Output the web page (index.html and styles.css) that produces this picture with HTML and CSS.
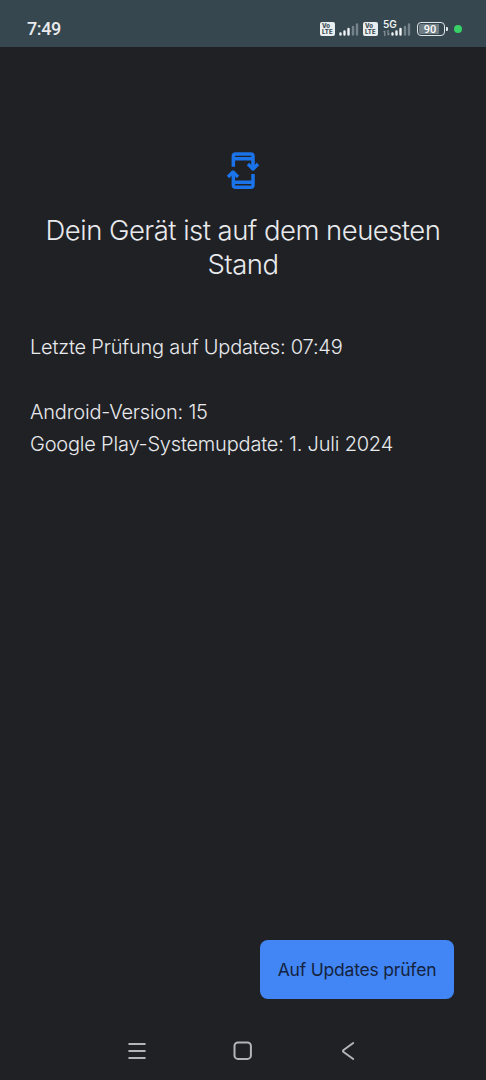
FILE: index.html
```html
<!DOCTYPE html>
<html lang="de">
<head>
  <meta charset="UTF-8" />
  <meta name="viewport" content="width=device-width, initial-scale=1.0"/>
  <title>Systemupdate</title>
  <link rel="stylesheet" href="styles.css">
</head>
<body>
  <div class="screen">
    <header class="status-bar">
      <span class="clock">7:49</span>
      <div class="status-icons">
        <span class="volte"><span>Vo</span><span>LTE</span></span>
        <svg class="signal" width="20" height="13" viewBox="0 0 20 13">
          <path class="bar-on" d="M1.5 10.5v1M5.5 8.5v3M9.5 6v5.5" />
          <path class="bar-off" d="M14 4v7.5M18 1.5v10" />
        </svg>
        <span class="volte"><span>Vo</span><span>LTE</span></span>
        <div class="mobile-data">
          <span class="network">5G</span>
          <svg class="data-arrows" width="7" height="6" viewBox="0 0 7 6">
            <path d="M1.8 6V1M.3 2.3L1.8.8M5 0v5M6.6 3.7L5 5.2" />
          </svg>
          <svg class="signal" width="20" height="13" viewBox="0 0 20 13">
            <path class="bar-on" d="M1.5 10.5v1M5.5 8.5v3M9.5 6v5.5" />
            <path class="bar-off" d="M14 4v7.5M18 1.5v10" />
          </svg>
        </div>
        <div class="battery"><span class="level">90</span></div>
        <span class="dot"></span>
      </div>
    </header>

    <main class="content">
      <svg class="update-icon" width="36" height="40" viewBox="36 30 108 120">
        <path d="M61 80V49Q61 42 68 42H113Q120 42 120 49V88M61 56H120" />
        <path d="M120 102V135Q120 142 113 142H68Q61 142 61 135V96M61 127H120" />
        <path d="M105 72L120 87L135 72M45 111L60 96L75 111" />
      </svg>
      <h1>Dein Gerät ist auf dem neuesten <br>Stand</h1>
      <div class="details">
        <p class="last-check">Letzte Prüfung auf Updates: 07:49</p>
        <p class="version">Android-Version: 15</p>
        <p class="play-update">Google Play-Systemupdate: 1. Juli 2024</p>
      </div>
    </main>

    <div class="actions">
      <button class="check-btn">Auf Updates prüfen</button>
    </div>

    <nav class="nav-bar">
      <svg width="20" height="20" viewBox="0 0 20 20">
        <path d="M2.2 3H17.8M2.2 10H17.8M2.2 17H17.8" />
      </svg>
      <svg width="20" height="20" viewBox="0 0 20 20">
        <rect x="1.5" y="1.5" width="16.4" height="16.4" rx="3.5" />
      </svg>
      <svg width="20" height="20" viewBox="0 0 20 20">
        <path d="M14.2 2L4.6 9Q3.4 10 4.6 11L14.2 18" />
      </svg>
    </nav>
  </div>
</body>
</html>
```
FILE: styles.css
```css
body {
  margin: 0;
  background: #202125;
  color: #e8eaed;
  font-family: Inter, sans-serif;
}

.screen {
  display: flex;
  flex-direction: column;
  height: 1080px;
}

.status-bar {
  display: flex;
  align-items: center;
  justify-content: space-between;
  box-sizing: border-box;
  height: 47px;
  padding: 11px 24px 0 27px;
  background: #37474f;
}

.clock {
  margin-bottom: 2px;
  font-family: Roboto, sans-serif;
  font-size: 18px;
  font-weight: 500;
  letter-spacing: -0.4px;
}

.status-icons {
  display: flex;
  align-items: center;
}

.volte {
  display: flex;
  flex-direction: column;
  box-sizing: border-box;
  width: 15px;
  height: 14px;
  padding: 1px 0 0 2px;
  border-radius: 2px;
  background: #e8eef0;
  color: #37474f;
  font-size: 6px;
  font-weight: 800;
  line-height: 6px;
}

.signal {
  margin: 0 4px;
  fill: none;
  stroke-width: 2.4;
  stroke-linecap: round;
}

.bar-on {
  stroke: #eef3f5;
}

.bar-off {
  stroke: #75838a;
}

.mobile-data {
  display: grid;
  grid-template-columns: 8px 20px;
  align-items: end;
  margin: 0 6px 0 5px;
}

.mobile-data > * {
  grid-row: 1;
}

.mobile-data .signal {
  grid-column: 2;
  margin: 0;
}

.network {
  grid-column: 1 / 3;
  align-self: start;
  margin-top: -3px;
  color: #eef3f5;
  font-size: 10px;
  font-weight: 600;
  line-height: 9px;
}

.data-arrows {
  grid-column: 1;
  fill: none;
  stroke: #9aa6ab;
  stroke-width: 1;
}

.battery {
  position: relative;
  box-sizing: border-box;
  width: 28px;
  height: 14px;
  padding: 1px;
  border: 1.5px solid #dde4e7;
  border-radius: 4px;
}

.battery::after {
  content: "";
  position: absolute;
  top: 4px;
  right: -4px;
  width: 2px;
  height: 4px;
  border-radius: 0 1px 1px 0;
  background: #dde4e7;
}

.level {
  display: block;
  width: 22px;
  height: 10px;
  border-radius: 2px;
  background: linear-gradient(to right, #6f7d84 20px, #37474f 20px);
  color: #fff;
  font-family: Roboto, sans-serif;
  font-size: 11px;
  font-weight: 500;
  line-height: 11px;
  text-align: center;
}

.dot {
  width: 8px;
  height: 8px;
  margin-left: 9px;
  border-radius: 50%;
  background: #38d167;
}

.content {
  display: flex;
  flex: 1;
  flex-direction: column;
  align-items: center;
  padding: 103px 30px 0;
}

.update-icon {
  fill: none;
  stroke: #1a73e8;
  stroke-width: 10.5;
  stroke-linejoin: round;
}

h1 {
  margin: 23px 0 0;
  font-size: 27.5px;
  font-weight: 350;
  line-height: 34px;
  letter-spacing: -0.53px;
  text-align: center;
  white-space: nowrap;
}

.details {
  align-self: stretch;
  margin-top: 50px;
  font-size: 20px;
  font-weight: 330;
  line-height: 32.5px;
  letter-spacing: -0.2px;
  white-space: nowrap;
}

.details p {
  margin: 0;
}

.details .last-check {
  margin-bottom: 32px;
}

.actions {
  display: flex;
  justify-content: flex-end;
  padding: 0 32px 42px 0;
}

.check-btn {
  width: 194px;
  height: 59px;
  padding: 0;
  border: 0;
  border-radius: 8px;
  background: #4285f4;
  color: #14233f;
  font-family: Inter, sans-serif;
  font-size: 17.5px;
  letter-spacing: -0.2px;
  white-space: nowrap;
}

.nav-bar {
  display: flex;
  justify-content: center;
  gap: 86px;
  height: 39px;
}

.nav-bar svg {
  fill: none;
  stroke: #b4b5b7;
  stroke-width: 2;
  stroke-linecap: round;
}
```
